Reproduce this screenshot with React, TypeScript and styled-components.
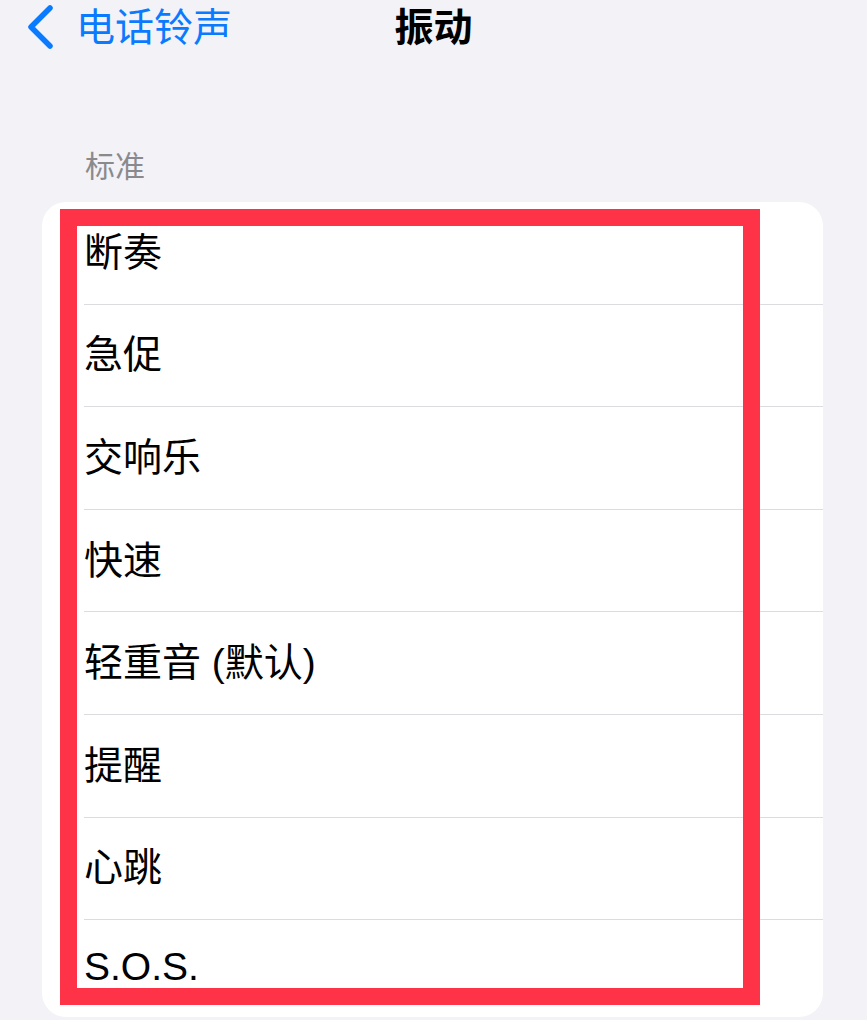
import React from "react";
import styled, { createGlobalStyle } from "styled-components";

const GlobalStyle = createGlobalStyle`
  html, body {
    margin: 0;
    padding: 0;
    background: #f2f2f7;
  }
  body {
    font-family: "Liberation Sans", "Noto Sans CJK SC", sans-serif;
    -webkit-font-smoothing: antialiased;
  }
`;

const Page = styled.div`
  width: 867px;
  min-height: 1020px;
  background: #f2f2f7;
  overflow: hidden;
`;

const NavBar = styled.header`
  height: 50px;
  padding-top: 4px;
  box-sizing: border-box;
  display: grid;
  grid-template-columns: 1fr auto 1fr;
  align-items: center;
`;

const BackButton = styled.button`
  justify-self: start;
  display: flex;
  align-items: center;
  gap: 20px;
  padding: 0 0 0 26px;
  border: none;
  background: none;
  color: #0a7aff;
  font-family: inherit;
  font-size: 39px;
  line-height: 1;
  cursor: pointer;
`;

const Title = styled.h1`
  margin: 0;
  font-size: 39px;
  font-weight: 700;
  color: #000;
  line-height: 1;
`;

const SectionLabel = styled.div`
  margin: 102px 0 20px 85px;
  font-size: 30px;
  line-height: 30px;
  color: #8a8a8e;
`;

const Card = styled.section`
  position: relative;
  margin: 0 44px 0 42px;
  height: 815px;
  background: #fff;
  border-radius: 24px;
  overflow: hidden;
`;

const Row = styled.div<{ $last?: boolean }>`
  height: 102.6px;
  margin-left: 42px;
  padding-bottom: 8px;
  display: flex;
  align-items: center;
  box-sizing: border-box;
  border-bottom: ${(p) => (p.$last ? "none" : "1.5px solid #dcdce0")};
  font-size: 39px;
  color: #000;
`;

const Highlight = styled.div`
  position: absolute;
  left: 18px;
  top: 7px;
  width: 700px;
  height: 796px;
  box-sizing: border-box;
  border: 17px solid #ff3347;
  pointer-events: none;
`;

const Chevron = () => (
  <svg width="30" height="46" viewBox="0 0 30 46" fill="none">
    <path
      d="M24 4 L5 23 L24 42"
      stroke="#0a7aff"
      strokeWidth="5.5"
      strokeLinecap="round"
      strokeLinejoin="round"
    />
  </svg>
);

const patterns = [
  "断奏",
  "急促",
  "交响乐",
  "快速",
  "轻重音 (默认)",
  "提醒",
  "心跳",
  "S.O.S.",
];

export default function App() {
  return (
    <Page>
      <GlobalStyle />
      <NavBar>
        <BackButton>
          <Chevron />
          电话铃声
        </BackButton>
        <Title>振动</Title>
        <span />
      </NavBar>
      <SectionLabel>标准</SectionLabel>
      <Card>
        {patterns.map((name, i) => (
          <Row key={name} $last={i === patterns.length - 1}>
            {name}
          </Row>
        ))}
        <Highlight />
      </Card>
    </Page>
  );
}
